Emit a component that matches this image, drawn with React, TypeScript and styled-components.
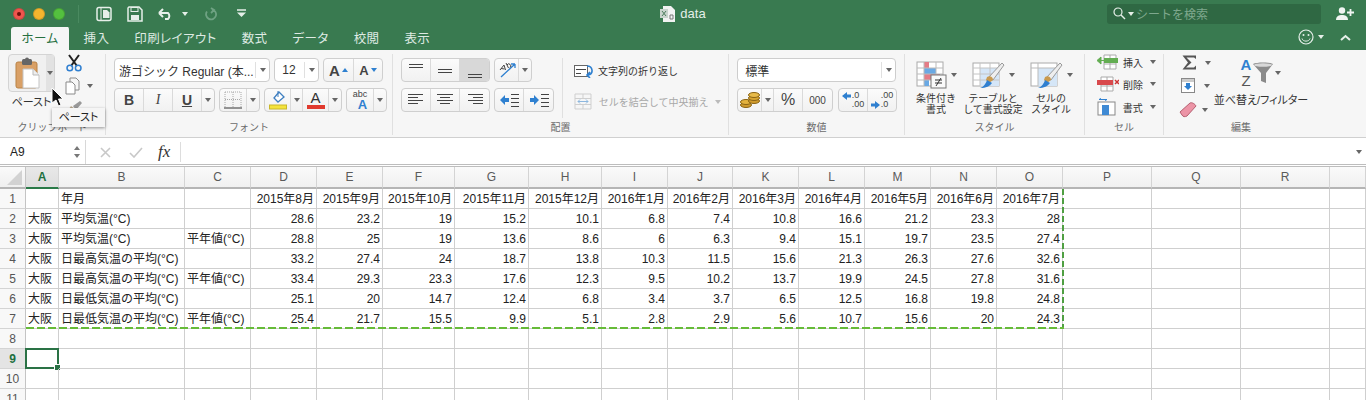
import React from "react"
import styled, { createGlobalStyle } from "styled-components"

const GlobalStyle = createGlobalStyle`
  html, body {
    margin: 0;
    height: 400px;
    overflow: hidden;
    background: white;
    font-family: "Liberation Sans", "Noto Sans CJK JP", sans-serif;
  }
  * { box-sizing: border-box; }
`

const Window = styled.div`
  position: relative;
  width: 1366px;
  height: 400px;
  overflow: hidden;
`

/* title bar */
const Header = styled.header`
  background: #397a50;
  height: 50px;
  display: flex;
  flex-direction: column;
`
const TitleRow = styled.div`
  height: 27px;
  display: grid;
  grid-template-columns: 1fr auto 1fr;
  align-items: center;
`
const QuickBar = styled.div`
  display: flex;
  align-items: center;
  padding-left: 13px;
`
const Light = styled.span<{ $color: string; $dot?: boolean }>`
  width: 12px;
  height: 12px;
  border-radius: 50%;
  margin-right: 8px;
  background: ${(p) => p.$color};
  border: 1px solid rgba(0, 0, 0, 0.15);
  display: flex;
  align-items: center;
  justify-content: center;
  &::after {
    content: "";
    display: ${(p) => (p.$dot ? "block" : "none")};
    width: 4px;
    height: 4px;
    border-radius: 50%;
    background: #6e0f0a;
  }
`
const BarDivider = styled.span`
  width: 1px;
  height: 18px;
  background: #4a8a60;
  margin-left: 5px;
`
const QuickItem = styled.span<{ $left: number }>`
  display: flex;
  margin-left: ${(p) => p.$left}px;
`
const DocTitle = styled.div`
  display: flex;
  align-items: center;
  gap: 5px;
  color: #e4efe8;
  font-size: 13px;
`
const RightBar = styled.div`
  display: flex;
  justify-content: flex-end;
  align-items: center;
  padding-right: 12px;
`
const SearchBox = styled.div`
  width: 214px;
  height: 20px;
  background: #2f6843;
  border-radius: 3px;
  display: flex;
  align-items: center;
  gap: 2px;
  padding-left: 6px;
  margin-right: 15px;
  color: #7fa88e;
  font-size: 12px;
`
const TabRow = styled.nav`
  height: 23px;
  display: flex;
  padding-left: 11px;
  align-items: stretch;
`
const Tab = styled.div<{ $active?: boolean }>`
  padding: 0 ${(p) => (p.$active ? "0" : "12.5px")};
  ${(p) => (p.$active ? "width: 60px; margin-right: 0; border-right: 2px solid #397a50;" : "")}
  font-size: 12.5px;
  letter-spacing: 0.4px;
  font-feature-settings: "palt";
  text-align: center;
  line-height: 24px;
  color: ${(p) => (p.$active ? "#27703f" : "#dfeae3")};
  background: ${(p) => (p.$active ? "#f6f6f6" : "transparent")};
  border-radius: 3px 3px 0 0;
`
const TabTools = styled.div`
  margin-left: auto;
  display: flex;
  align-items: center;
  gap: 4px;
  padding: 0 15px 3px 0;
`
const ToolsSpacer = styled.span`
  width: 8px;
`

/* ribbon */
const Ribbon = styled.section`
  height: 88px;
  background: #f6f6f6;
  border-bottom: 1px solid #d0d0d0;
  display: flex;
  padding: 4px 0 2px;
`
const Group = styled.div<{ $width: number; $last?: boolean }>`
  width: ${(p) => p.$width}px;
  flex: ${(p) => (p.$last ? 1 : "none")};
  border-right: ${(p) => (p.$last ? "none" : "1px solid #e0e0e0")};
  display: flex;
  flex-direction: column;
`
const GroupBody = styled.div<{ $pad?: string }>`
  flex: 1;
  display: flex;
  padding: ${(p) => p.$pad ?? "4px 0 0 8px"};
  min-height: 0;
`
const GroupLabel = styled.div<{ $width?: number }>`
  height: 15px;
  text-align: center;
  font-size: 10px;
  line-height: 15px;
  color: #6c6c6c;
  ${(p) => (p.$width ? `width: ${p.$width}px;` : "")}
`
const Stack = styled.div<{ $gap?: number; $width?: number; $top?: number; $center?: boolean }>`
  display: flex;
  flex-direction: column;
  gap: ${(p) => p.$gap ?? 6}px;
  padding-top: ${(p) => p.$top ?? 0}px;
  ${(p) => (p.$width ? `width: ${p.$width}px;` : "")}
  ${(p) => (p.$center ? "align-items: center;" : "")}
`
const Row = styled.div<{ $gap?: number; $indent?: number; $top?: boolean }>`
  display: flex;
  align-items: ${(p) => (p.$top ? "flex-start" : "center")};
  gap: ${(p) => p.$gap ?? 4}px;
  padding-left: ${(p) => p.$indent ?? 0}px;
`
const ButtonGroup = styled.div`
  display: flex;
  height: 24px;
  border: 1px solid #cfcfcf;
  border-radius: 4px;
  background: linear-gradient(#fbfbfb, #f1f1f1);
  overflow: hidden;
`
const ToolButton = styled.div<{ $width: number; $active?: boolean; $size?: number }>`
  width: ${(p) => p.$width}px;
  display: flex;
  align-items: center;
  justify-content: center;
  gap: 2px;
  color: #444;
  font-size: ${(p) => p.$size ?? 12}px;
  background: ${(p) => (p.$active ? "#d8d8d8" : "transparent")};
  &:not(:last-child) {
    border-right: 1px solid #dadada;
  }
`
const Caret = styled.span<{ $color?: string; $up?: boolean }>`
  width: 0;
  height: 0;
  flex: none;
  border-left: 3.5px solid transparent;
  border-right: 3.5px solid transparent;
  border-${(p) => (p.$up ? "bottom" : "top")}: 4px solid ${(p) => p.$color ?? "#666"};
`
const SelectBox = styled.div<{ $width: number }>`
  width: ${(p) => p.$width}px;
  height: 24px;
  background: white;
  border: 1px solid #cdcdcd;
  border-radius: 4px;
  display: flex;
  align-items: center;
  font-size: 12px;
  color: #333;
  padding-left: 4px;
`
const SelectText = styled.span`
  flex: 1;
  white-space: nowrap;
  overflow: hidden;
`
const SelectArrow = styled.span`
  width: 14px;
  height: 16px;
  border-left: 1px solid #e0e0e0;
  display: flex;
  align-items: center;
  justify-content: center;
`
const PasteButton = styled.div`
  width: 47px;
  height: 38px;
  border: 1px solid #d4d4d4;
  border-radius: 4px;
  background: #f0f0f0;
  display: flex;
`
const PasteFace = styled.div`
  width: 37px;
  display: flex;
  align-items: center;
  justify-content: center;
`
const PasteSide = styled.div`
  flex: 1;
  background: #e2e2e2;
  display: flex;
  align-items: center;
  justify-content: center;
`
const SmallLabel = styled.div`
  font-size: 11px;
  font-feature-settings: "palt";
  color: #333;
  text-align: center;
  white-space: nowrap;
`
const ActionRow = styled.div<{ $disabled?: boolean }>`
  display: flex;
  align-items: center;
  gap: 4px;
  font-size: 10px;
  color: ${(p) => (p.$disabled ? "#a8a8a8" : "#333")};
  white-space: nowrap;
`
const BigTool = styled.div<{ $width: number }>`
  width: ${(p) => p.$width}px;
  display: flex;
  flex-direction: column;
  align-items: center;
  gap: 3px;
`
const BigIcon = styled.div`
  display: flex;
  align-items: center;
  gap: 3px;
  height: 31px;
`
const BigLabel = styled.div`
  font-size: 10px;
  line-height: 11px;
  color: #333;
  text-align: center;
  white-space: pre-line;
`
const Divider = styled.div`
  width: 1px;
  height: 60px;
  background: #e0e0e0;
  margin: 0 11px 0 8px;
`
const LetterA = styled.span<{ $size: number }>`
  font-size: ${(p) => p.$size}px;
  color: #444;
  font-weight: 700;
`
const StyleLetter = styled.span<{ $italic?: boolean; $under?: boolean }>`
  font-size: 14px;
  font-weight: ${(p) => (p.$italic ? 400 : 700)};
  font-style: ${(p) => (p.$italic ? "italic" : "normal")};
  text-decoration: ${(p) => (p.$under ? "underline" : "none")};
  font-family: ${(p) => (p.$italic ? '"Liberation Serif", serif' : "inherit")};
  color: #444;
`
const ColorLetter = styled.span<{ $bar: string }>`
  font-size: 15px;
  line-height: 14px;
  color: #333;
  border-bottom: 4px solid ${(p) => p.$bar};
  width: 18px;
  text-align: center;
`
const AbcWrap = styled.span`
  display: flex;
  flex-direction: column;
  align-items: flex-end;
  font-size: 9px;
  line-height: 9px;
  color: #444;
  & b {
    font-size: 13px;
    line-height: 11px;
    color: #2f80d0;
  }
`
const DecimalText = styled.span`
  font-size: 9px;
  line-height: 9px;
  color: #444;
  display: grid;
  grid-template-columns: auto auto;
  align-items: center;
  column-gap: 1px;
`
const SortLetters = styled.span`
  display: flex;
  flex-direction: column;
  align-items: center;
  font-size: 15px;
  line-height: 16px;
  font-weight: 700;
  color: #2f80d0;
  & i {
    font-style: normal;
    font-weight: 400;
    color: #555;
  }
`

/* formula bar */
const FormulaBar = styled.div`
  height: 29px;
  background: white;
  border-bottom: 3px double #bdbdbd;
  display: flex;
  align-items: center;
  padding-top: 2px;
`
const NameBox = styled.div`
  width: 86px;
  height: 100%;
  border-right: 1px solid #d8d8d8;
  display: flex;
  align-items: center;
  justify-content: space-between;
  font-size: 12px;
  color: #222;
  padding: 0 5px 0 10px;
`
const Spinner = styled.span`
  display: flex;
  flex-direction: column;
  gap: 4px;
`
const FormulaTools = styled.div`
  width: 72px;
  display: flex;
  align-items: center;
  padding-left: 14px;
  gap: 18px;
  height: 100%;
`
const FxLabel = styled.span`
  font-family: "Liberation Serif", serif;
  font-style: italic;
  font-size: 17px;
  color: #333;
  width: 23px;
  line-height: 20px;
  border-right: 1px solid #ddd;
`
const FormulaInput = styled.div`
  flex: 1;
  display: flex;
  justify-content: flex-end;
  padding-right: 4px;
`

/* sheet */
const Sheet = styled.div`
  position: relative;
  display: grid;
  grid-template-columns: 26px 33px 126px 66px 66px 66px 72px 74px 73px 66px 65px 66px 66px 66px 66px 66px 89px 89px 89px 1fr;
  grid-template-rows: 22px;
  grid-auto-rows: 20px;
  font-size: 12px;
`
const Corner = styled.div`
  background: linear-gradient(#fafafa, #efefef);
  border-right: 1px solid #c4c4c4;
  border-bottom: 2px solid #b5b5b5;
  display: flex;
  align-items: flex-end;
  justify-content: flex-end;
  padding: 0 3px 2px 0;
`
const ColHeader = styled.div<{ $selected?: boolean }>`
  background: ${(p) => (p.$selected ? "linear-gradient(#e8e8e8, #dedede)" : "linear-gradient(#fafafa, #f0f0f0)")};
  border-right: 1px solid #d4d4d4;
  border-bottom: 2px solid ${(p) => (p.$selected ? "#2a7a48" : "#b5b5b5")};
  color: ${(p) => (p.$selected ? "#21703f" : "#5a5a5a")};
  font-weight: ${(p) => (p.$selected ? 700 : 400)};
  text-align: center;
  line-height: 20px;
`
const RowHeader = styled.div<{ $selected?: boolean }>`
  background: ${(p) => (p.$selected ? "#e4e4e4" : "#f8f8f8")};
  border-right: 1px solid #c4c4c4;
  border-bottom: 1px solid #d4d4d4;
  color: ${(p) => (p.$selected ? "#21703f" : "#555")};
  font-weight: ${(p) => (p.$selected ? 700 : 400)};
  text-align: center;
  line-height: 20px;
`
const Cell = styled.div<{ $number?: boolean; $selected?: boolean }>`
  position: relative;
  border-right: 1px solid #cfcfcf;
  border-bottom: 1px solid #cfcfcf;
  color: #222;
  line-height: 20px;
  white-space: nowrap;
  padding: 0 2px;
  text-align: ${(p) => (p.$number ? "right" : "left")};
  ${(p) =>
    p.$selected
      ? `
    &::before {
      content: "";
      position: absolute;
      inset: -1px -1px -1px -1px;
      border: 2px solid #2a7245;
    }
    &::after {
      content: "";
      position: absolute;
      right: -3px;
      bottom: -3px;
      width: 5px;
      height: 5px;
      background: #2a7245;
      border: 1px solid white;
    }`
      : ""}
`
const CopyRange = styled.div`
  position: absolute;
  left: 26px;
  top: 22px;
  width: 1038px;
  height: 140px;
  pointer-events: none;
  background-image: repeating-linear-gradient(90deg, #66bb38 0 8px, transparent 8px 11px),
    repeating-linear-gradient(180deg, #4f9f42 0 6px, transparent 6px 9px);
  background-size: 100% 2px, 2px 100%;
  background-position: left bottom, right top;
  background-repeat: no-repeat;
`

/* overlays */
const Tooltip = styled.div`
  position: absolute;
  left: 52px;
  top: 108px;
  width: 53px;
  height: 19px;
  background: #f5f5f5;
  box-shadow: 0 1px 3px rgba(0, 0, 0, 0.4);
  font-size: 11px;
  font-feature-settings: "palt";
  line-height: 19px;
  text-align: center;
  color: #222;
`
const Pointer = styled.svg`
  position: absolute;
  left: 51px;
  top: 87px;
`

const Svg = ({ w, h, children }: { w: number; h: number; children: React.ReactNode }) => (
  <svg width={w} height={h} viewBox={`0 0 ${w} ${h}`} fill="none">
    {children}
  </svg>
)

const PasteIcon = () => (
  <Svg w={26} h={32}>
    <rect x="1" y="5" width="21" height="26" rx="2" fill="#d9a066" stroke="#b98245" />
    <rect x="7" y="2" width="10" height="6" rx="1.5" fill="#666" />
    <circle cx="12" cy="2.5" r="2" fill="#666" />
    <path d="M8 12h10l6 6v13H8z" fill="#fff" stroke="#c4c4c4" />
    <path d="M18 12v6h6" stroke="#bbb" fill="#eee" />
  </Svg>
)
const CutIcon = () => (
  <Svg w={16} h={18}>
    <path d="M3 1l8 11M13 1L5 12" stroke="#222" strokeWidth="2" />
    <circle cx="3.8" cy="14" r="2.8" stroke="#2f7fd0" strokeWidth="1.5" />
    <circle cx="12.2" cy="14" r="2.8" stroke="#2f7fd0" strokeWidth="1.5" />
  </Svg>
)
const CopyIcon = () => (
  <Svg w={15} h={18}>
    <path d="M5 1h6l3 3v9h-9z" fill="#f6f6f6" stroke="#8a8a8a" />
    <path d="M1 5h6l3 3v9H1z" fill="#fff" stroke="#8a8a8a" />
  </Svg>
)
const BrushIcon = () => (
  <Svg w={18} h={14}>
    <path d="M1 13l5-7 4 3-5 5z" fill="#b9a78b" />
    <path d="M8 6l7-5 2 2-6 7z" fill="#999" />
  </Svg>
)
const BordersIcon = () => (
  <Svg w={18} h={18}>
    <path d="M1 1h16v15M1 1v15M9 1v15M1 8.5h16" stroke="#a8a8a8" strokeDasharray="1 1" />
    <path d="M0 17h18" stroke="#333" />
  </Svg>
)
const BucketIcon = () => (
  <Svg w={18} h={20}>
    <path d="M5 8l5-6 5 5-6 5z" fill="#fff" stroke="#3f7fc0" strokeWidth="1.3" />
    <path d="M9 1v6" stroke="#3f7fc0" />
    <rect x="0.5" y="15" width="17" height="4" fill="#f4e33c" stroke="#c9b82a" />
  </Svg>
)
const OrientIcon = () => (
  <Svg w={20} h={18}>
    <path d="M4 16L18 3M18 3h-4M18 3v4" stroke="#2f80d0" strokeWidth="1.3" />
    <path d="M3 9l4-5 1.5 5M4 7.5l3.5.5M9 2l2.5 5M10 4a2 2 0 113 2.5" stroke="#444" />
  </Svg>
)
const Lines = ({ rows }: { rows: [number, number, number][] }) => (
  <Svg w={18} h={18}>
    {rows.map(([a, b, y]) => (
      <path key={y} d={`M${a} ${y}.5H${b}`} stroke="#444" />
    ))}
  </Svg>
)
const IndentIcon = ({ right }: { right?: boolean }) => (
  <Svg w={20} h={14}>
    {right ? <path d="M1 5h4V2l5 5-5 5V9H1z" fill="#2f80d0" /> : <path d="M10 5H6V2L1 7l5 5V9h4z" fill="#2f80d0" />}
    <path d="M12 1.500h8M12 5.500h8M12 9.500h8M12 13.500h8" stroke="#444" />
  </Svg>
)
const WrapIcon = () => (
  <Svg w={20} h={14}>
    <rect x="0.5" y="1.500" width="13" height="11" fill="#fff" stroke="#666" />
    <path d="M2 5.500h10M2 9.500h5" stroke="#444" />
    <path d="M13 2c6 0 7 8 1 9M16 8l-3 3 3 3" stroke="#2f80d0" strokeWidth="1.6" />
  </Svg>
)
const MergeIcon = () => (
  <Svg w={18} h={17}>
    <path d="M1 1h16v15H1zM1 5.500h16M1 11.500h16M9 1v4M9 12v4" stroke="#cfcfcf" />
    <path d="M4 8.500h10M4 8.500l2-2M4 8.500l2 2M14 8.500l-2-2M14 8.500l-2 2" stroke="#8db7de" />
  </Svg>
)
const CoinsIcon = () => (
  <Svg w={20} h={17}>
    <ellipse cx="6" cy="13" rx="5.500" ry="2.500" fill="#cf9a2c" stroke="#8a6414" />
    <ellipse cx="6" cy="10" rx="5.500" ry="2.500" fill="#e3b23e" stroke="#8a6414" />
    <ellipse cx="14" cy="9" rx="5.500" ry="2.500" fill="#cf9a2c" stroke="#8a6414" />
    <ellipse cx="14" cy="6" rx="5.500" ry="2.500" fill="#d8a633" stroke="#8a6414" />
    <ellipse cx="14" cy="3" rx="5.500" ry="2.500" fill="#e8bb4a" stroke="#8a6414" />
  </Svg>
)
const SmallArrow = ({ right }: { right?: boolean }) => (
  <Svg w={9} h={8}>
    {right ? <path d="M0 2.500h4V0l5 4-5 4V5.500H0z" fill="#2f80d0" /> : <path d="M9 2.500H5V0L0 4l5 4V5.500h4z" fill="#2f80d0" />}
  </Svg>
)
const CondIcon = () => (
  <Svg w={32} h={28}>
    <rect x="1" y="1" width="26" height="24" fill="#fff" stroke="#aaa" />
    <rect x="8" y="1" width="5" height="6" fill="#e47c86" />
    <rect x="8" y="7" width="12" height="6" fill="#6aa9e4" />
    <rect x="8" y="13" width="16" height="6" fill="#e47c86" />
    <rect x="8" y="19" width="5" height="6" fill="#6aa9e4" />
    <path d="M8 1v24M20 1v24M1 7h26M1 13h26M1 19h26" stroke="#bbb" />
    <rect x="15" y="14" width="15" height="13" fill="#fafafa" stroke="#777" />
    <path d="M19 19h7M19 22h7M25 17l-5 8" stroke="#333" />
  </Svg>
)
const TableBrush = ({ plain }: { plain?: boolean }) => (
  <Svg w={34} h={30}>
    <rect x="1" y="3" width="26" height="23" fill="#fff" stroke="#aaa" />
    <rect x="8" y="8" width="19" height="18" fill="#d5e6f7" />
    {plain ? (
      <path d="M1 8h26M8 3v23" stroke="#bbb" />
    ) : (
      <path d="M1 8h26M1 14h26M1 20h26M8 3v23M18 3v23" stroke="#c4c4c4" />
    )}
    <path d="M16 18L30 3l2 2-11 15z" fill="#eee" stroke="#999" />
    <path d="M15 17c3-2 6 0 6 3l-4 3-3-3z" fill="#c99a4e" />
    <path d="M8 28c4-1 6-5 7-8l5 3c-2 3-6 5-12 5z" fill="#2f7fd0" />
  </Svg>
)
const InsertIcon = () => (
  <Svg w={22} h={16}>
    <path d="M7 1h12v14H7zM7 10h12M13 1v14" stroke="#aaa" fill="#fff" />
    <rect x="7" y="4" width="14" height="5" fill="#63ad52" />
    <path d="M7 6.500H1M0 6.500l4-3.500v7z" fill="#63ad52" stroke="#63ad52" />
  </Svg>
)
const DeleteIcon = () => (
  <Svg w={22} h={16}>
    <path d="M4 1h12v14H4zM4 10h12M10 1v14" stroke="#aaa" fill="#fff" />
    <rect x="0" y="4" width="16" height="5" fill="#d8494c" />
    <path d="M18 4l4 4M22 4l-4 4" stroke="#c33" strokeWidth="1.500" />
  </Svg>
)
const FormatIcon = () => (
  <Svg w={19} h={18}>
    <path d="M2 1.500h8M2 1.500l2-1M10 1.500l-2 1" stroke="#2f80d0" />
    <rect x="1" y="4" width="17" height="13" fill="#fff" stroke="#888" />
    <rect x="5" y="7" width="7" height="10" fill="#3f8ad4" />
  </Svg>
)
const SigmaIcon = () => (
  <Svg w={15} h={15}>
    <path d="M0.500 0.500H14V4L12 2.500H4.500L9.500 7.500 4 12.500H12L14 10.500V14.500H0.500L6 7.500z" fill="#555" />
  </Svg>
)
const FillIcon = () => (
  <Svg w={14} h={15}>
    <rect x="0.5" y="0.500" width="13" height="14" fill="#fff" stroke="#888" />
    <rect x="1" y="1" width="12" height="3" fill="#ccc" />
    <path d="M5 5h4v3h2l-4 4-4-4h2z" fill="#2f80d0" />
  </Svg>
)
const EraserIcon = () => (
  <Svg w={18} h={17}>
    <path d="M1 11L11 2c2-1 5 1 6 3L8 15c-2 1-4 1-5-1z" fill="#ec94a6" stroke="#b55f70" />
  </Svg>
)
const FunnelIcon = () => (
  <Svg w={22} h={22}>
    <path d="M1 2c4-2 16-2 20 0l-7 9v10l-5-2v-8z" fill="#8a8a8a" />
    <ellipse cx="11" cy="3" rx="9" ry="1.800" fill="#d8d8d8" />
  </Svg>
)
const SheetBook = () => (
  <Svg w={16} h={16}>
    <rect x="1" y="1.500" width="14" height="13" rx="2" stroke="#e6efe9" strokeWidth="1.500" />
    <path d="M5 2v12" stroke="#e6efe9" />
    <path d="M7 4h4l2.500 2.500V12H7z" fill="#e6efe9" />
  </Svg>
)
const SaveIcon = () => (
  <Svg w={16} h={16}>
    <path d="M2 1h10l3 3v11H1V2z" stroke="#e6efe9" strokeWidth="1.500" />
    <rect x="4" y="1.500" width="7" height="4" stroke="#e6efe9" />
    <rect x="4" y="9" width="8" height="5" fill="#e6efe9" />
  </Svg>
)
const UndoIcon = () => (
  <Svg w={16} h={13}>
    <path d="M1 6h9a4 4 0 010 6H7M1 6l4-4M1 6l4 4" stroke="#e6efe9" strokeWidth="2" />
  </Svg>
)
const RedoIcon = () => (
  <Svg w={13} h={14}>
    <path d="M8 2.500a5 5 0 11-5 2M7 1l3 2-3 3" stroke="#6fa283" strokeWidth="1.800" />
  </Svg>
)
const CustomizeIcon = () => (
  <Svg w={9} h={9}>
    <path d="M0 1h9" stroke="#e6efe9" strokeWidth="1.500" />
    <path d="M0 3.500h9L4.500 8z" fill="#e6efe9" />
  </Svg>
)
const ExcelDoc = () => (
  <Svg w={15} h={16}>
    <path d="M3 0h8l4 4v12H3z" fill="#f2f2f2" />
    <rect x="0" y="3" width="8" height="9" fill="#c9d4cd" />
    <path d="M2 5l4 5M6 5l-4 5" stroke="#4c7c5c" />
    <path d="M10 9h3v4h-3z" stroke="#777" />
  </Svg>
)
const SearchIcon = () => (
  <Svg w={13} h={13}>
    <circle cx="5" cy="5" r="4" stroke="#e6efe9" strokeWidth="1.200" />
    <path d="M8 8l4 4" stroke="#e6efe9" strokeWidth="1.400" />
  </Svg>
)
const AddUserIcon = () => (
  <Svg w={18} h={13}>
    <circle cx="6" cy="3.500" r="3.200" fill="#f1f5f2" />
    <path d="M0 13c0-4 3-5 6-5s6 1 6 5z" fill="#f1f5f2" />
    <path d="M14.500 2v7M11 5.500h7" stroke="#f1f5f2" strokeWidth="1.800" />
  </Svg>
)
const SmileIcon = () => (
  <Svg w={16} h={16}>
    <circle cx="8" cy="8" r="7" stroke="#e6efe9" strokeWidth="1.200" />
    <circle cx="5.500" cy="6" r="1" fill="#e6efe9" />
    <circle cx="10.500" cy="6" r="1" fill="#e6efe9" />
    <path d="M4 9.500c1 3.500 7 3.500 8 0" stroke="#e6efe9" />
  </Svg>
)
const ChevronUp = () => (
  <Svg w={11} h={7}>
    <path d="M1 6l4.500-4L10 6" stroke="#e6efe9" strokeWidth="2" />
  </Svg>
)
const CrossIcon = () => (
  <Svg w={11} h={11}>
    <path d="M1 1l9 9M10 1l-9 9" stroke="#c8c8c8" strokeWidth="1.600" />
  </Svg>
)
const CheckIcon = () => (
  <Svg w={14} h={11}>
    <path d="M1 6l4 4 8-9" stroke="#c8c8c8" strokeWidth="1.600" />
  </Svg>
)

const columns = ["A", "B", "C", "D", "E", "F", "G", "H", "I", "J", "K", "L", "M", "N", "O", "P", "Q", "R", ""]
const months = ["2015年8月", "2015年9月", "2015年10月", "2015年11月", "2015年12月", "2016年1月", "2016年2月", "2016年3月", "2016年4月", "2016年5月", "2016年6月", "2016年7月"]
const rows: [string, string, string, (string | number)[]][] = [
  ["大阪", "平均気温(°C)", "", [28.6, 23.2, 19, 15.2, 10.1, 6.8, 7.4, 10.8, 16.6, 21.2, 23.3, 28]],
  ["大阪", "平均気温(°C)", "平年値(°C)", [28.8, 25, 19, 13.6, 8.6, 6, 6.3, 9.4, 15.1, 19.7, 23.5, 27.4]],
  ["大阪", "日最高気温の平均(°C)", "", [33.2, 27.4, 24, 18.7, 13.8, 10.3, 11.5, 15.6, 21.3, 26.3, 27.6, 32.6]],
  ["大阪", "日最高気温の平均(°C)", "平年値(°C)", [33.4, 29.3, 23.3, 17.6, 12.3, 9.5, 10.2, 13.7, 19.9, 24.5, 27.8, 31.6]],
  ["大阪", "日最低気温の平均(°C)", "", [25.1, 20, 14.7, 12.4, 6.8, 3.4, 3.7, 6.5, 12.5, 16.8, 19.8, 24.8]],
  ["大阪", "日最低気温の平均(°C)", "平年値(°C)", [25.4, 21.7, 15.5, 9.9, 5.1, 2.8, 2.9, 5.6, 10.7, 15.6, 20, 24.3]],
]
const blankCols = columns.slice(15)

function SheetGrid() {
  return (
    <Sheet>
      <Corner>
        <Svg w={15} h={15}>
          <path d="M15 0v15H0z" fill="#d2d2d2" />
        </Svg>
      </Corner>
      {columns.map((c, i) => (
        <ColHeader key={i} $selected={c === "A"}>
          {c}
        </ColHeader>
      ))}

      <RowHeader>1</RowHeader>
      <Cell />
      <Cell>年月</Cell>
      <Cell />
      {months.map((m) => (
        <Cell key={m} $number>
          {m}
        </Cell>
      ))}
      {blankCols.map((_, i) => (
        <Cell key={i} />
      ))}

      {rows.map(([city, name, note, values], r) => (
        <React.Fragment key={r}>
          <RowHeader>{r + 2}</RowHeader>
          <Cell>{city}</Cell>
          <Cell>{name}</Cell>
          <Cell>{note}</Cell>
          {values.map((v, i) => (
            <Cell key={i} $number>
              {v}
            </Cell>
          ))}
          {blankCols.map((_, i) => (
            <Cell key={i} />
          ))}
        </React.Fragment>
      ))}

      {[8, 9, 10, 11].map((n) => (
        <React.Fragment key={n}>
          <RowHeader $selected={n === 9}>{n}</RowHeader>
          {columns.map((_, i) => (
            <Cell key={i} $selected={n === 9 && i === 0} />
          ))}
        </React.Fragment>
      ))}
      <CopyRange />
    </Sheet>
  )
}

function TopBar() {
  return (
    <Header>
      <TitleRow>
        <QuickBar>
          <Light $color="#f0554e" $dot />
          <Light $color="#f5b52e" />
          <Light $color="#54c03f" />
          <BarDivider />
          <QuickItem $left={17}><SheetBook /></QuickItem>
          <QuickItem $left={15}><SaveIcon /></QuickItem>
          <QuickItem $left={15}><UndoIcon /></QuickItem>
          <QuickItem $left={8}><Caret $color="#e6efe9" /></QuickItem>
          <QuickItem $left={16}><RedoIcon /></QuickItem>
          <QuickItem $left={20}><CustomizeIcon /></QuickItem>
        </QuickBar>
        <DocTitle>
          <ExcelDoc />
          data
        </DocTitle>
        <RightBar>
          <SearchBox>
            <SearchIcon />
            <Caret $color="#e6efe9" />
            <span>シートを検索</span>
          </SearchBox>
          <AddUserIcon />
        </RightBar>
      </TitleRow>
      <TabRow>
        <Tab $active>ホーム</Tab>
        <Tab>挿入</Tab>
        <Tab>印刷レイアウト</Tab>
        <Tab>数式</Tab>
        <Tab>データ</Tab>
        <Tab>校閲</Tab>
        <Tab>表示</Tab>
        <TabTools>
          <SmileIcon />
          <Caret $color="#e6efe9" />
          <ToolsSpacer />
          <ChevronUp />
        </TabTools>
      </TabRow>
    </Header>
  )
}

function RibbonBar() {
  return (
    <Ribbon>
      <Group $width={106}>
        <GroupBody $pad="0 0 0 8px">
          <Stack $gap={1} $width={47}>
            <PasteButton>
              <PasteFace><PasteIcon /></PasteFace>
              <PasteSide><Caret /></PasteSide>
            </PasteButton>
            <SmallLabel>ペースト</SmallLabel>
          </Stack>
          <Stack $gap={5}>
            <Row $gap={0} $indent={11}><CutIcon /></Row>
            <Row $gap={7} $indent={10}><CopyIcon /><Caret /></Row>
            <Row $indent={10}><BrushIcon /></Row>
          </Stack>
        </GroupBody>
        <GroupLabel>クリップボード</GroupLabel>
      </Group>

      <Group $width={287}>
        <GroupBody $pad="4px 0 0 8px">
          <Stack>
            <Row>
              <SelectBox $width={156}>
                <SelectText>游ゴシック Regular (本...</SelectText>
                <SelectArrow><Caret /></SelectArrow>
              </SelectBox>
              <SelectBox $width={45}>
                <SelectText>&nbsp;12</SelectText>
                <SelectArrow><Caret /></SelectArrow>
              </SelectBox>
              <ButtonGroup>
                <ToolButton $width={30}><LetterA $size={15}>A</LetterA><Caret $up $color="#2f80d0" /></ToolButton>
                <ToolButton $width={28}><LetterA $size={13}>A</LetterA><Caret $color="#2f80d0" /></ToolButton>
              </ButtonGroup>
            </Row>
            <Row>
              <ButtonGroup>
                <ToolButton $width={29}><StyleLetter>B</StyleLetter></ToolButton>
                <ToolButton $width={29}><StyleLetter $italic>I</StyleLetter></ToolButton>
                <ToolButton $width={29}><StyleLetter $under>U</StyleLetter></ToolButton>
                <ToolButton $width={12}><Caret /></ToolButton>
              </ButtonGroup>
              <ButtonGroup>
                <ToolButton $width={27}><BordersIcon /></ToolButton>
                <ToolButton $width={12}><Caret /></ToolButton>
              </ButtonGroup>
              <ButtonGroup>
                <ToolButton $width={26}><BucketIcon /></ToolButton>
                <ToolButton $width={12}><Caret /></ToolButton>
                <ToolButton $width={26}><ColorLetter $bar="#e03a2e">A</ColorLetter></ToolButton>
                <ToolButton $width={12}><Caret /></ToolButton>
              </ButtonGroup>
              <ButtonGroup>
                <ToolButton $width={27}><AbcWrap>abc<b>A</b></AbcWrap></ToolButton>
                <ToolButton $width={12}><Caret /></ToolButton>
              </ButtonGroup>
            </Row>
          </Stack>
        </GroupBody>
        <GroupLabel>フォント</GroupLabel>
      </Group>

      <Group $width={336}>
        <GroupBody $pad="4px 0 0 8px">
          <Stack>
            <Row>
              <ButtonGroup>
                <ToolButton $width={29}><Lines rows={[[2, 16, 3], [2, 16, 6]]} /></ToolButton>
                <ToolButton $width={29}><Lines rows={[[2, 16, 8], [2, 16, 11]]} /></ToolButton>
                <ToolButton $width={29} $active><Lines rows={[[2, 16, 13], [2, 16, 16]]} /></ToolButton>
              </ButtonGroup>
              <ButtonGroup>
                <ToolButton $width={24}><OrientIcon /></ToolButton>
                <ToolButton $width={12}><Caret /></ToolButton>
              </ButtonGroup>
            </Row>
            <Row>
              <ButtonGroup>
                <ToolButton $width={29}><Lines rows={[[1, 16, 3], [1, 11, 6], [1, 16, 9], [1, 11, 12]]} /></ToolButton>
                <ToolButton $width={29}><Lines rows={[[1, 17, 3], [4, 14, 6], [1, 17, 9], [4, 14, 12]]} /></ToolButton>
                <ToolButton $width={29}><Lines rows={[[2, 17, 3], [7, 17, 6], [2, 17, 9], [7, 17, 12]]} /></ToolButton>
              </ButtonGroup>
              <ButtonGroup>
                <ToolButton $width={29}><IndentIcon /></ToolButton>
                <ToolButton $width={29}><IndentIcon right /></ToolButton>
              </ButtonGroup>
            </Row>
          </Stack>
          <Divider />
          <Stack $gap={15} $top={5}>
            <ActionRow><WrapIcon />文字列の折り返し</ActionRow>
            <ActionRow $disabled><MergeIcon />&nbsp;セルを結合して中央揃え&nbsp;<Caret $color="#bbb" /></ActionRow>
          </Stack>
        </GroupBody>
        <GroupLabel>配置</GroupLabel>
      </Group>

      <Group $width={176}>
        <GroupBody $pad="4px 0 0 8px">
          <Stack>
            <SelectBox $width={159}>
              <SelectText>&nbsp;標準</SelectText>
              <SelectArrow><Caret /></SelectArrow>
            </SelectBox>
            <Row $gap={5}>
              <ButtonGroup>
                <ToolButton $width={24}><CoinsIcon /></ToolButton>
                <ToolButton $width={12}><Caret /></ToolButton>
                <ToolButton $width={29} $size={16}>%</ToolButton>
                <ToolButton $width={29} $size={10}>000</ToolButton>
              </ButtonGroup>
              <ButtonGroup>
                <ToolButton $width={29}>
                  <DecimalText><SmallArrow /><span>.0</span><span /><span>.00</span></DecimalText>
                </ToolButton>
                <ToolButton $width={28}>
                  <DecimalText><span />.00<SmallArrow right /><span>.0</span></DecimalText>
                </ToolButton>
              </ButtonGroup>
            </Row>
          </Stack>
        </GroupBody>
        <GroupLabel>数値</GroupLabel>
      </Group>

      <Group $width={180}>
        <GroupBody $pad="5px 0 0 7px">
          <Row $gap={0} $top>
            <BigTool $width={48}>
              <BigIcon><CondIcon /><Caret /></BigIcon>
              <BigLabel>{"条件付き\n書式"}</BigLabel>
            </BigTool>
            <BigTool $width={66}>
              <BigIcon><TableBrush /><Caret /></BigIcon>
              <BigLabel>{"テーブルと\nして書式設定"}</BigLabel>
            </BigTool>
            <BigTool $width={50}>
              <BigIcon><TableBrush plain /><Caret /></BigIcon>
              <BigLabel>{"セルの\nスタイル"}</BigLabel>
            </BigTool>
          </Row>
        </GroupBody>
        <GroupLabel>スタイル</GroupLabel>
      </Group>

      <Group $width={79}>
        <GroupBody $pad="0 0 0 12px">
          <Stack $gap={6}>
            <ActionRow><InsertIcon />挿入&nbsp;<Caret /></ActionRow>
            <ActionRow><DeleteIcon />削除&nbsp;<Caret /></ActionRow>
            <ActionRow><FormatIcon />&nbsp;書式&nbsp;<Caret /></ActionRow>
          </Stack>
        </GroupBody>
        <GroupLabel>セル</GroupLabel>
      </Group>

      <Group $width={180} $last>
        <GroupBody $pad="0 0 0 15px">
          <Stack $gap={8} $width={34} $top={1}>
            <Row $gap={8} $indent={3}><SigmaIcon /><Caret /></Row>
            <Row $gap={9} $indent={2}><FillIcon /><Caret /></Row>
            <Row $gap={5}><EraserIcon /><Caret /></Row>
          </Stack>
          <Stack $gap={2} $top={3} $width={96} $center>
            <Row $gap={1}>
              <SortLetters>A<i>Z</i></SortLetters>
              <FunnelIcon />
              <Caret />
            </Row>
            <SmallLabel>並べ替え/フィルター</SmallLabel>
          </Stack>
        </GroupBody>
        <GroupLabel $width={154}>編集</GroupLabel>
      </Group>
    </Ribbon>
  )
}

export default function App() {
  return (
    <Window>
      <GlobalStyle />
      <TopBar />
      <RibbonBar />
      <FormulaBar>
        <NameBox>
          A9
          <Spinner>
            <Caret $up $color="#777" />
            <Caret $color="#777" />
          </Spinner>
        </NameBox>
        <FormulaTools>
          <CrossIcon />
          <CheckIcon />
        </FormulaTools>
        <FxLabel>fx</FxLabel>
        <FormulaInput><Caret /></FormulaInput>
      </FormulaBar>
      <SheetGrid />
      <Pointer width="14" height="20" viewBox="0 0 14 20">
        <path d="M1 1v15l4-3 2.500 6 2.500-1-2.500-6H12z" fill="#111" stroke="#fff" />
      </Pointer>
      <Tooltip>ペースト</Tooltip>
    </Window>
  )
}
